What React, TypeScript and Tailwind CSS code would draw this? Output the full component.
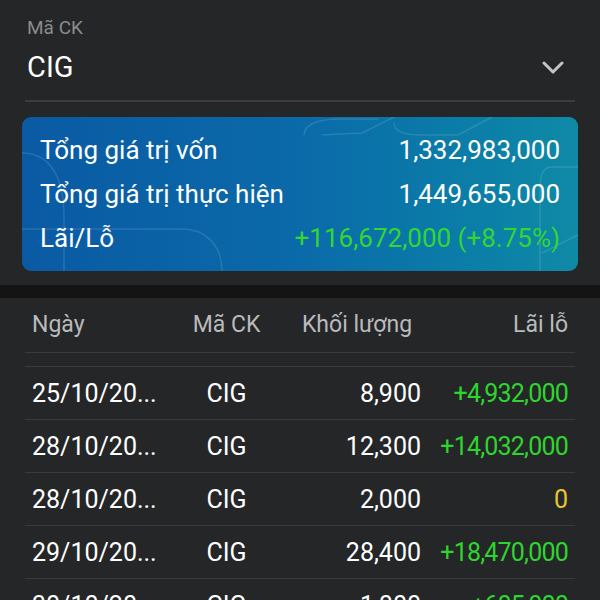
type Row = { date: string; code: string; volume: string; pnl: string; tone: 'up' | 'flat' }

const rows: Row[] = [
  { date: '25/10/20...', code: 'CIG', volume: '8,900', pnl: '+4,932,000', tone: 'up' },
  { date: '28/10/20...', code: 'CIG', volume: '12,300', pnl: '+14,032,000', tone: 'up' },
  { date: '28/10/20...', code: 'CIG', volume: '2,000', pnl: '0', tone: 'flat' },
  { date: '29/10/20...', code: 'CIG', volume: '28,400', pnl: '+18,470,000', tone: 'up' },
  { date: '30/10/20...', code: 'CIG', volume: '1,000', pnl: '+605,000', tone: 'up' },
]

function SummaryCard() {
  return (
    <div className="relative mx-[22px] mt-[15px] overflow-hidden rounded-[9px] bg-gradient-to-r from-[#0a5aa3] via-[#0b6aa9] to-[#0f8aa6] px-[18px] py-[11px]">
      {/* faint decorative curves */}
      <svg className="pointer-events-none absolute inset-0 h-full w-full" viewBox="0 0 556 154" preserveAspectRatio="none">
        <g fill="none" stroke="rgba(255,255,255,0.12)" strokeWidth="1.5">
          <path d="M0 36 C 28 36, 42 60, 42 100 L 42 154" />
          <path d="M0 112 L 160 112 C 185 112, 200 130, 200 154" />
          <path d="M282 18 C 282 6, 300 2, 318 2 L 356 2" />
          <path d="M372 0 L 340 16 L 300 18" />
          <path d="M470 0 L 436 18 L 400 18 C 380 18, 372 14, 372 6" />
          <path d="M556 50 L 530 50 C 520 50, 518 60, 518 70 L 518 154" />
          <path d="M556 118 L 520 136" />
        </g>
      </svg>
      <div className="relative flex h-[44px] items-center justify-between text-[26px] text-white">
        <span>Tổng giá trị vốn</span>
        <span>1,332,983,000</span>
      </div>
      <div className="relative flex h-[44px] items-center justify-between text-[26px] text-white">
        <span>Tổng giá trị thực hiện</span>
        <span>1,449,655,000</span>
      </div>
      <div className="relative flex h-[44px] items-center justify-between text-[26px]">
        <span className="text-white">Lãi/Lỗ</span>
        <span className="text-[#33d633]">+116,672,000 (+8.75%)</span>
      </div>
    </div>
  )
}

export default function App() {
  return (
    <div
      className="h-[600px] w-[600px] overflow-hidden bg-[#252628]"
      style={{ fontFamily: 'Roboto, "Noto Sans", sans-serif' }}
    >
      <div className="px-[27px] pt-[16px]">
        <div className="h-[24px] text-[19px] leading-[24px] text-[#8b8c8e]">Mã CK</div>
        <div className="mt-[10px] flex h-[36px] items-center justify-between pr-[9px]">
          <span className="text-[29px] text-white">CIG</span>
          <svg width="22" height="14" viewBox="0 0 22 14" fill="none" stroke="#c4c4c4" strokeWidth="3" strokeLinecap="round" strokeLinejoin="round">
            <path d="M2 2 L11 11 L20 2" />
          </svg>
        </div>
      </div>
      <div className="mx-[25px] mt-[14px] h-[2px] bg-[#3b3c3f]" />

      <SummaryCard />

      <div className="mt-[14px] h-[13px] bg-[#141415]" />

      <div className="px-[25px]">
        <div className="grid h-[55px] grid-cols-[128px_133px_128px_147px] items-center border-b border-[#3a3b3e] px-[7px] text-[23px] text-[#b9babc]">
          <span>Ngày</span>
          <span className="text-center">Mã CK</span>
          <span className="text-center">Khối lượng</span>
          <span className="text-right">Lãi lỗ</span>
        </div>
        <div className="h-[14px] border-b border-[#3a3b3e]" />
        {rows.map((r, i) => (
          <div
            key={i}
            className="grid h-[53px] grid-cols-[128px_133px_128px_147px] items-center border-b border-[#3a3b3e] px-[7px] pt-[1px] text-[25px] text-white"
          >
            <span className="whitespace-nowrap">{r.date}</span>
            <span className="text-center">{r.code}</span>
            <span className="text-right">{r.volume}</span>
            <span
              className={
                r.tone === 'up'
                  ? 'text-right tracking-[-0.8px] text-[#2fd52f]'
                  : 'text-right text-[#e8c630]'
              }
            >
              {r.pnl}
            </span>
          </div>
        ))}
      </div>
    </div>
  )
}
